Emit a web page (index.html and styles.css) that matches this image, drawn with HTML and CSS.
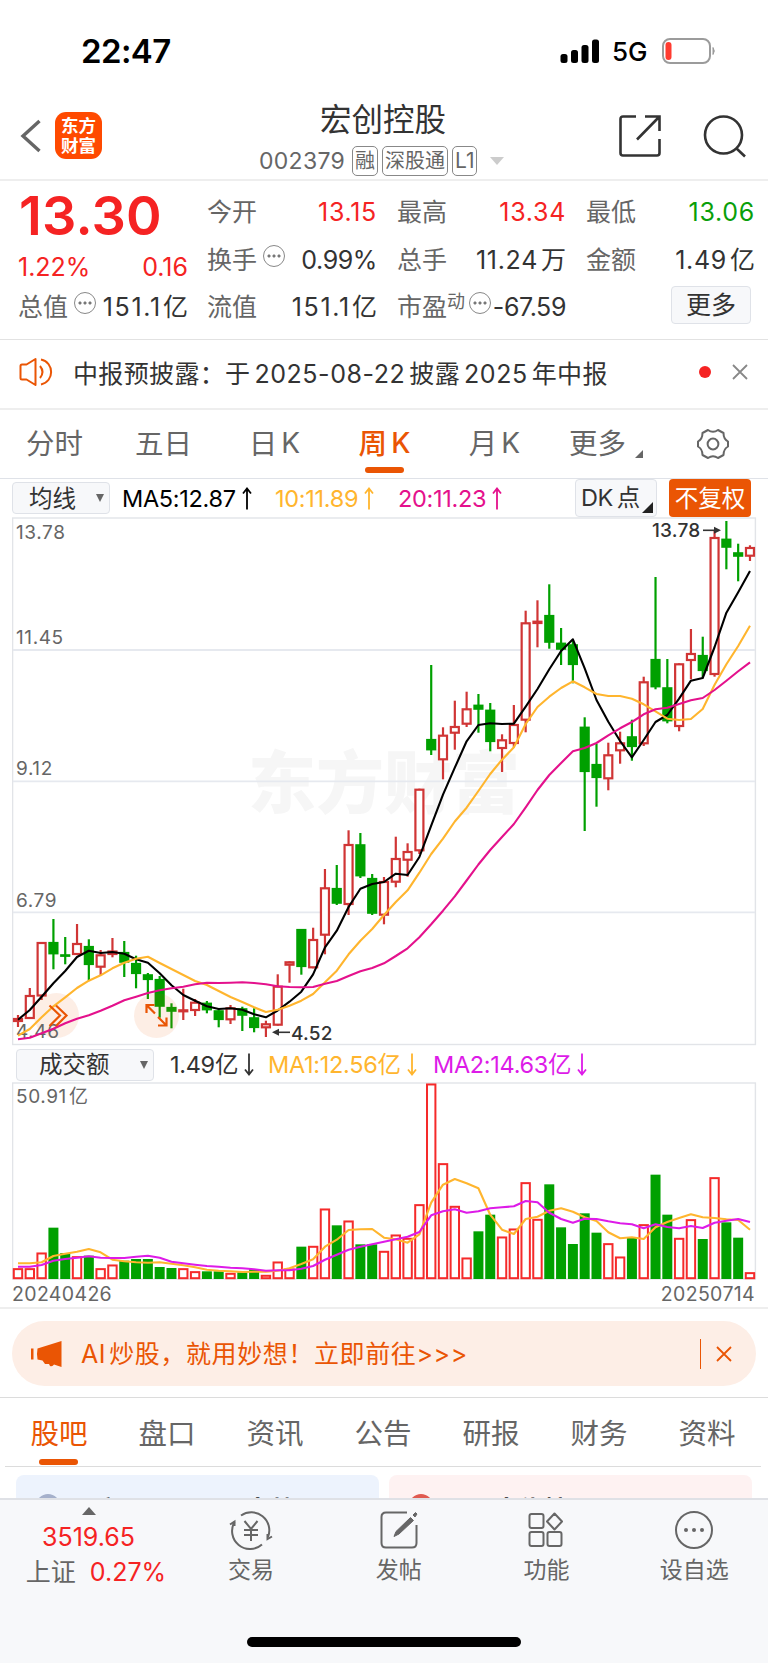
FILE: index.html
```
<!DOCTYPE html>
<html lang="zh-CN">

<head>
    <meta charset="UTF-8">
    <meta name="viewport" content="width=device-width, initial-scale=1.0">
    <title>宏创控股 002379</title>
    <link rel="stylesheet" href="styles.css">
</head>

<body>
    <div class="status-bar">
        <span class="clock">22:47</span>
        <svg class="signal" width="40" height="25" viewBox="0 0 40 25">
            <rect x="0.5" y="15" width="7" height="9" rx="2.5" />
            <rect x="11" y="11" width="7" height="13" rx="2.5" />
            <rect x="21.5" y="6" width="7" height="18" rx="2.5" />
            <rect x="32" y="0.5" width="7" height="23.5" rx="2.5" />
        </svg>
        <span class="network">5G</span>
        <svg class="battery" width="54" height="26" viewBox="0 0 54 26">
            <rect x="1" y="1" width="47" height="24" rx="7" fill="none" stroke="#9b9b9b" stroke-width="2" />
            <rect x="3.5" y="4" width="6" height="18" rx="3" fill="#ff3b30" />
            <path d="M51 9.5q2.5 3.5 0 7z" fill="#9b9b9b" stroke="#9b9b9b" />
        </svg>
    </div>

    <header class="header">
        <svg class="back" width="22" height="36" viewBox="0 0 22 36">
            <path d="M19.5 3L3 18l16.5 15" fill="none" stroke="#666" stroke-width="3.4" />
        </svg>
        <div class="logo"><span>东方</span><span>财富</span></div>
        <div class="stock">
            <h1>宏创控股</h1>
            <div class="code">
                <span class="code-number">002379</span>
                <span class="tag">融</span>
                <span class="tag">深股通</span>
                <span class="tag">L1</span>
                <svg class="caret" width="14" height="8" viewBox="0 0 14 8"><path d="M0 0h14l-7 8z" fill="#ccc" /></svg>
            </div>
        </div>
        <svg class="share" width="44" height="44" viewBox="0 0 44 44" fill="none" stroke="#333" stroke-width="2.6">
            <path d="M18 2.500H5Q2.500 2.500 2.500 5V39Q2.500 41.500 5 41.500H39Q41.500 41.500 41.500 39V25" />
            <path d="M27 2.500H41.500V17M41.500 2.500L19 25.500" />
        </svg>
        <svg class="search" width="44" height="44" viewBox="0 0 44 44" fill="none" stroke="#333" stroke-width="2.6">
            <circle cx="20.5" cy="21" r="18.500" />
            <path d="M33 34l9 8.500" />
        </svg>
    </header>

    <section class="quote">
        <div class="quote-main">
            <div class="price">13.30</div>
            <div class="change"><span>1.22%</span><span>0.16</span></div>
            <div class="stat"><label>总值</label><i class="more-dot"></i><b class="wide">151.1<em>亿</em></b></div>
        </div>
        <div class="quote-grid">
            <div class="stat"><label>今开</label><b class="up">13.15</b></div>
            <div class="stat"><label>最高</label><b class="up">13.34</b></div>
            <div class="stat"><label>最低</label><b class="down">13.06</b></div>
            <div class="stat"><label>换手</label><i class="more-dot"></i><b class="tight">0.99%</b></div>
            <div class="stat"><label>总手</label><b>11.24<em>万</em></b></div>
            <div class="stat"><label>金额</label><b>1.49<em>亿</em></b></div>
            <div class="stat"><label>流值</label><b class="wide">151.1<em>亿</em></b></div>
            <div class="stat"><label>市盈<sup>动</sup></label><i class="more-dot pe"></i><b class="tight">-67.59</b></div>
            <div class="stat"><button class="more-btn">更多</button></div>
        </div>
    </section>

    <section class="notice">
        <svg width="34" height="30" viewBox="0 0 34 30" fill="none" stroke="#ea5504" stroke-width="2" stroke-linejoin="round">
            <path d="M3 7.500Q1.500 7.500 1.500 9V21Q1.500 22.500 3 22.500H7.500L16.500 28V2L7.500 7.500Z" />
            <path d="M21 9q5 6 0 12M22 2.500c13.500 3 13.500 22 0 25" />
        </svg>
        <p>中报预披露：于<span>2025-08-22</span>披露<span>2025</span>年中报</p>
        <i class="dot"></i>
        <svg class="close" width="16" height="16" viewBox="0 0 16 16"><path d="M1 1l14 14M15 1L1 15" fill="none" stroke="#888" stroke-width="1.8" /></svg>
    </section>

    <nav class="periods">
        <a>分时</a>
        <a>五日</a>
        <a>日<span>K</span></a>
        <a class="active">周<span>K</span></a>
        <a>月<span>K</span></a>
        <a class="more">更多<svg class="corner" width="8" height="8" viewBox="0 0 8 8"><path d="M8 0v8H0z" fill="#666" /></svg></a>
        <a><svg class="gear" width="34" height="32" viewBox="0 0 34 32" fill="none" stroke="#666" stroke-width="2">
            <path d="M12 2Q17 5.500 22 2L27.500 5Q27.500 11 32 13.500V18.500Q27.500 21 27.500 27L22 30Q17 26.500 12 30L6.500 27Q6.500 21 2 18.500V13.500Q6.500 11 6.500 5Z" stroke-linejoin="round" />
            <circle cx="17" cy="16" r="5.400" />
        </svg></a>
    </nav>

    <div class="ma-row">
        <button class="select ma-select">均线<i></i></button>
        <span class="ma5">MA5:12.87<svg class="arrow" viewBox="0 0 10 22"><path d="M5 22V1M1 6l4-5 4 5" /></svg></span>
        <span class="ma10">10:11.89<svg class="arrow" viewBox="0 0 10 22"><path d="M5 22V1M1 6l4-5 4 5" /></svg></span>
        <span class="ma20">20:11.23<svg class="arrow" viewBox="0 0 10 22"><path d="M5 22V1M1 6l4-5 4 5" /></svg></span>
        <button class="dk">DK<em>点</em><svg width="11" height="11" viewBox="0 0 11 11"><path d="M11 0v11H0z" fill="#222" /></svg></button>
        <button class="adjust">不复权</button>
    </div>

    <svg id="price-chart" class="chart" width="745" height="529" viewBox="12 517 745 529"></svg>

    <div class="vol-row">
        <button class="select vol-select">成交额<i></i></button>
        <span class="vol-now">1.49亿<svg class="arrow" viewBox="0 0 10 22"><path d="M5 0v21M1 16l4 5 4-5" /></svg></span>
        <span class="vol-ma1">MA1:12.56亿<svg class="arrow" viewBox="0 0 10 22"><path d="M5 0v21M1 16l4 5 4-5" /></svg></span>
        <span class="vol-ma2">MA2:14.63亿<svg class="arrow" viewBox="0 0 10 22"><path d="M5 0v21M1 16l4 5 4-5" /></svg></span>
    </div>

    <svg id="volume-chart" class="chart" width="745" height="198" viewBox="12 1082 745 198"></svg>
    <div class="dates"><span>20240426</span><span>20250714</span></div>

    <div class="promo-wrap">
        <div class="promo">
            <svg width="32" height="28" viewBox="0 0 32 28" fill="#ea5504">
                <path d="M0 8.500h2.500v11H0zM6.500 8.500L30.500 1v26L23 24.500q-1.500 2.500-4 1.500l-1-2-4 0-2.500-3.500-5-1q-1-5.500 0-11z" />
            </svg>
            <span class="promo-text">AI<em>炒股，就用妙想！立即前往</em>&gt;&gt;&gt;</span>
            <i class="divider"></i>
            <svg width="16" height="16" viewBox="0 0 16 16"><path d="M1 1l14 14M15 1L1 15" fill="none" stroke="#ea5504" stroke-width="1.800" /></svg>
        </div>
    </div>

    <nav class="sections">
        <a class="active">股吧</a>
        <a>盘口</a>
        <a>资讯</a>
        <a>公告</a>
        <a>研报</a>
        <a>财务</a>
        <a>资料</a>
    </nav>

    <div class="cards">
        <div class="card blue"><i></i><span>国产DeepSeek大战</span></div>
        <div class="card pink"><i></i><span>股票大佬榜</span></div>
    </div>

    <footer class="toolbar">
        <div class="index">
            <svg width="14" height="8" viewBox="0 0 14 8"><path d="M7 0l7 8H0z" fill="#666" /></svg>
            <span class="index-value">3519.65</span>
            <span class="index-change"><em>上证</em>0.27%</span>
        </div>
        <a>
            <svg width="44" height="40" viewBox="0 0 44 40" fill="none" stroke="#666" stroke-width="2">
                <path d="M12 5.500A18 18 0 0 1 39 27M33 34.500A18 18 0 0 1 5.500 12" />
                <path d="M1 14.500l4.500-3V16M43 26.500l-4.500 2.500V24" />
                <path d="M15.500 11L22 19l6.500-8M22 19v12M15 20h14M15 25h14" />
            </svg>
            <span>交易</span>
        </a>
        <a>
            <svg width="44" height="40" viewBox="0 0 44 40" fill="none" stroke="#666" stroke-width="2">
                <path d="M30 2.500H9Q4.500 2.500 4.500 7V33Q4.500 37.500 9 37.500H35Q39.500 37.500 39.500 33V15" />
                <path d="M33.500 7.500l3 3L22 24l-5 2.500L19 21.500zM36 5l2.500-2.500 1.500 1.500-2 3z" fill="#666" stroke-width="1" />
            </svg>
            <span>发帖</span>
        </a>
        <a>
            <svg width="44" height="40" viewBox="0 0 44 40" fill="none" stroke="#666" stroke-width="2">
                <rect x="5.500" y="4" width="14" height="14" rx="2" />
                <path d="M30.500 3.500l7.500 8-7.500 8-7.500-8z" stroke-linejoin="round" />
                <rect x="5.500" y="22" width="14" height="14" rx="2" />
                <rect x="23.500" y="22" width="14" height="14" rx="2" />
            </svg>
            <span>功能</span>
        </a>
        <a>
            <svg width="44" height="40" viewBox="0 0 44 40" fill="none" stroke="#666" stroke-width="2">
                <circle cx="22" cy="20" r="18" />
                <g fill="#666" stroke="none">
                    <circle cx="14" cy="20" r="2" />
                    <circle cx="22" cy="20" r="2" />
                    <circle cx="30" cy="20" r="2" />
                </g>
            </svg>
            <span>设自选</span>
        </a>
        <i class="home"></i>
    </footer>

    <script src="chart.js"></script>
</body>

</html>
```
FILE: styles.css
```
* {
    box-sizing: border-box;
}

body {
    width: 768px;
    height: 1663px;
    margin: 0;
    overflow: hidden;
    background: #fff;
    color: #333;
    font-family: Inter, "Noto Sans CJK SC", sans-serif;
    font-size: 25px;
}

i,
em {
    font-style: normal;
}

svg {
    display: block;
    flex: none;
}

button {
    font: inherit;
    color: inherit;
    padding: 0;
    margin: 0;
}

/* status bar */
.status-bar {
    display: flex;
    align-items: center;
    height: 92px;
    padding: 10px 52px 0 81px;
    color: #000;
}

.clock {
    flex: 1;
    font-size: 33px;
    font-weight: 600;
    letter-spacing: -0.600px;
}

.network {
    width: 35px;
    margin: 1px 15px 0 12px;
    font-size: 26px;
    font-weight: 500;
}

/* header */
.header {
    display: flex;
    align-items: center;
    height: 89px;
    padding: 0 21px 0 20px;
    border-bottom: 2px solid #eee;
}

.back {
    margin: 0 13px 0 0;
}

.logo {
    display: flex;
    flex-direction: column;
    justify-content: center;
    width: 47px;
    height: 47px;
    border-radius: 11px;
    background: #ff4a00;
    color: #fff;
    font-size: 17.500px;
    font-weight: 700;
    line-height: 20px;
    text-align: center;
}

.stock {
    width: 260px;
    margin-left: 152px;
    padding-top: 5px;
}

h1 {
    margin: 0 0 0 66px;
    font-size: 31.500px;
    font-weight: 400;
    line-height: 40px;
}

.code {
    display: flex;
    align-items: center;
    height: 32px;
    margin-top: 5px;
    padding-left: 5px;
    color: #666;
}

.code-number {
    width: 93px;
    font-size: 23px;
    letter-spacing: 0.300px;
}

.tag {
    height: 30px;
    margin-right: 4px;
    padding: 0 2px;
    border: 1.500px solid #888;
    border-radius: 5px;
    font-size: 20px;
    line-height: 28px;
    white-space: nowrap;
}

.tag:nth-of-type(4) {
    font-size: 21px;
}

.caret {
    margin-left: 9px;
}

.share {
    margin-left: 104px;
}

.search {
    margin-left: auto;
}

/* quote */
.quote {
    display: flex;
    height: 159px;
    padding: 8px 13px 0 19px;
    border-bottom: 1px solid #e2e2e2;
}

.quote-main {
    width: 169px;
    margin-right: 19px;
}

.price {
    height: 55px;
    color: #f52323;
    font-size: 54px;
    font-weight: 600;
    line-height: 53px;
    letter-spacing: 0.200px;
}

.change {
    display: flex;
    justify-content: space-between;
    height: 40px;
    margin-left: -1px;
    color: #f52323;
    line-height: 46px;
    letter-spacing: 0;
}

.quote-grid {
    flex: 1;
    display: grid;
    grid-template-columns: 170px 169px 169px;
    grid-auto-rows: 47.500px;
    column-gap: 20px;
}

.stat {
    display: flex;
    height: 47.500px;
    line-height: 47px;
    white-space: nowrap;
}

.quote-main .stat {
    margin-left: -1px;
}

.stat label {
    color: #666;
}

.stat b {
    margin-left: auto;
    font-weight: 400;
    letter-spacing: 0.700px;
}

.stat .wide {
    letter-spacing: 1.700px;
}

.stat .tight {
    letter-spacing: -0.400px;
}

.stat .up {
    color: #f52323;
}

.stat .down {
    color: #0a9f0a;
}

.stat b em {
    margin-left: 3px;
    letter-spacing: 0;
}

.stat .wide em {
    margin-left: 1px;
}

.stat sup {
    font-size: 18px;
    line-height: 0;
    vertical-align: 8px;
}

.more-dot {
    width: 22px;
    height: 22px;
    margin: 8px 0 0 6px;
    border: 1.500px solid #888;
    border-radius: 50%;
    background:
        radial-gradient(circle at 5px 10px, #777 1.300px, transparent 1.800px),
        radial-gradient(circle at 10px 10px, #777 1.300px, transparent 1.800px),
        radial-gradient(circle at 15px 10px, #777 1.300px, transparent 1.800px);
}

.more-dot.pe {
    margin-left: 4px;
}

.more-btn {
    width: 80px;
    height: 38px;
    margin: 2px 4px 0 auto;
    border: 1.500px solid #dfe2e8;
    border-radius: 4px;
    background: #f7f8fa;
    line-height: 35px;
}

/* notice */
.notice {
    display: flex;
    align-items: center;
    height: 70px;
    padding: 0 20px 4px 19px;
    border-bottom: 2px solid #eee;
}

.notice p {
    flex: 1;
    margin: 0 0 0 20px;
    letter-spacing: 0.350px;
    white-space: nowrap;
}

.notice p span {
    margin: 0 4px;
    letter-spacing: 0.550px;
}

.dot {
    width: 12px;
    height: 12px;
    margin-right: 21px;
    border-radius: 50%;
    background: #f52323;
}

/* period tabs */
.periods {
    display: grid;
    grid-template-columns: 109px 109px 113px 107px 113px 115px 102px;
    height: 69px;
    border-bottom: 1.500px solid #dfe2e8;
    color: #666;
    font-size: 28.500px;
}

.periods a {
    display: flex;
    justify-content: center;
    line-height: 67px;
}

.periods a span {
    margin-left: 4px;
    font-size: 28px;
}

.active {
    position: relative;
    color: #ea5504;
}

.active::after {
    content: "";
    position: absolute;
    left: 50%;
    bottom: 5px;
    width: 39px;
    height: 6px;
    margin-left: -20px;
    border-radius: 3px;
    background: #ea5504;
}

.periods .active {
    font-weight: 500;
}

.periods .more {
    padding-right: 5px;
}

.corner {
    margin: 40px 0 0 9px;
}

.gear {
    margin: 18px 0 0 -9px;
}

/* chart legends */
.ma-row,
.vol-row {
    position: relative;
    display: flex;
    align-items: center;
    padding-left: 12px;
    font-size: 23.500px;
    line-height: 32px;
    white-space: nowrap;
}

.ma-row {
    height: 38px;
}

.vol-row {
    height: 36px;
    padding: 1px 0 0 16px;
}

.ma-row > span,
.vol-row > span {
    display: flex;
    align-items: center;
    letter-spacing: -0.300px;
}

.ma-row > span {
    padding-top: 1px;
}

.arrow {
    width: 10px;
    height: 23px;
    margin-left: 6px;
    fill: none;
    stroke: currentColor;
    stroke-width: 1.800;
}

.select {
    display: flex;
    align-items: center;
    justify-content: space-between;
    height: 32px;
    border: 1.500px solid #dfe2e8;
    border-radius: 4px;
    background: #f7f8fa;
    line-height: 29px;
}

.select i {
    border: 4.500px solid transparent;
    border-top: 8px solid #666;
    border-bottom: 0;
}

.ma-select {
    width: 98px;
    padding: 0 5px 0 16px;
}

.vol-select {
    width: 138px;
    padding: 0 5px 0 22px;
}

.ma5 {
    width: 153px;
    margin-left: 12px;
    color: #000;
}

.ma10 {
    width: 123px;
    color: #ffb52e;
}

.ma20 {
    width: 177px;
    color: #e4118c;
}

.dk {
    display: flex;
    align-items: center;
    width: 82px;
    height: 38px;
    padding-left: 5px;
    border: 1.500px solid #dfe2e8;
    border-radius: 4px;
    background: #f7f8fa;
    letter-spacing: -0.500px;
}

.dk em {
    margin: 0 2px 0 4px;
}

.dk svg {
    margin-top: 18px;
}

.adjust {
    width: 82px;
    height: 38px;
    margin-left: 12px;
    border: 0;
    border-radius: 4px;
    background: #ea5504;
    color: #fff;
    line-height: 37px;
}

.vol-now {
    width: 98px;
    margin-left: 16px;
}

.vol-ma1 {
    width: 165px;
    color: #ffb52e;
}

.vol-ma2 {
    color: #dd1be8;
}

/* charts */
.chart {
    margin-left: 12px;
}

.frame {
    fill: none;
    stroke: #e2e4e8;
    stroke-width: 1.400;
}

.grid {
    stroke: #e6e9ef;
    stroke-width: 1.800;
}

.axis {
    fill: #666;
    font-size: 19px;
    letter-spacing: 0.600px;
}

.mark {
    fill: #333;
    font-size: 19px;
    font-weight: 500;
    letter-spacing: 0.200px;
}

.watermark {
    fill: #f6f6f6;
    font-size: 68px;
    font-weight: 900;
}

.candle-up {
    fill: #fff;
    stroke: #d03535;
    stroke-width: 2.200;
}

.candle-down {
    fill: #00a000;
    stroke: #00a000;
    stroke-width: 2.200;
}

.bar-up {
    fill: #fff;
    stroke: #f52a2a;
    stroke-width: 2;
}

.bar-down {
    fill: #00a000;
    stroke: #00a000;
    stroke-width: 1.600;
}

.line {
    fill: none;
    stroke-width: 2.100;
    stroke-linejoin: round;
}

.dates {
    display: flex;
    justify-content: space-between;
    height: 29px;
    padding: 0 13px 0 12px;
    border-bottom: 2px solid #eee;
    color: #666;
    font-size: 19.500px;
    line-height: 28px;
    letter-spacing: 0.350px;
}

/* promo */
.promo-wrap {
    height: 89px;
    padding: 12px 12px 0;
    border-bottom: 1px solid #dcdcdc;
}

.promo {
    display: flex;
    align-items: center;
    height: 65px;
    padding: 0 24px 0 19px;
    border-radius: 33px;
    background: #fdeee6;
    color: #ea5504;
}

.promo-text {
    flex: 1;
    margin-left: 18px;
    line-height: 36px;
    letter-spacing: 0.600px;
}

.promo-text em {
    margin-left: 3px;
}

.divider {
    width: 1.500px;
    height: 30px;
    margin-right: 15px;
    background: #ea5504;
}

/* section tabs */
.sections {
    display: grid;
    grid-template-columns: repeat(7, 108px);
    height: 69px;
    margin: 0 7px 0 5px;
    border-bottom: 1px solid #dcdcdc;
    color: #666;
    font-size: 28.500px;
    line-height: 71px;
    text-align: center;
}

.sections .active::after {
    bottom: 4px;
}

.cards {
    display: flex;
    gap: 10px;
    height: 31px;
    padding: 8px 16px 0;
    overflow: hidden;
}

.card {
    flex: 1;
    display: flex;
    height: 90px;
    padding: 19px 20px;
    border-radius: 8px;
    font-weight: 700;
    color: #222;
    line-height: 33px;
}

.card i {
    width: 24px;
    height: 24px;
    margin-right: 11px;
    border-radius: 50%;
}

.blue {
    background: #edf3fd;
}

.blue i {
    background: #a5b0cb;
}

.pink {
    background: #fef2f2;
}

.pink i {
    background: #e05a50;
}

/* toolbar */
.toolbar {
    position: relative;
    display: grid;
    grid-template-columns: 177px repeat(4, 147.800px);
    height: 166px;
    border-top: 2px solid #dfe1e6;
    background: #f7f8fa;
    color: #666;
}

.toolbar a {
    display: flex;
    flex-direction: column;
    align-items: center;
    padding-top: 10px;
    font-size: 23px;
    line-height: 40px;
}

.index {
    display: flex;
    flex-direction: column;
    align-items: center;
    padding-top: 7px;
}

.index-value,
.index-change {
    color: #f52323;
    line-height: 35px;
}

.index-value {
    margin-top: 5px;
}

.index-change {
    margin-left: 15px;
}

.index-change em {
    margin-right: 14px;
    color: #666;
}

.home {
    position: absolute;
    left: 247px;
    bottom: 17px;
    width: 274px;
    height: 10px;
    border-radius: 5px;
    background: #000;
}
```
FILE: chart.js
```
const FIRST_X = 18;
const STEP = 11.806;
const x = i => FIRST_X + i * STEP;

// [rising, high, body top, body bottom, low]
const candles = [
    [1, 1015, 1018, 1022, 1027], [1, 988, 995, 1019, 1019], [1, 942, 942, 996.5, 1000], [0, 919, 942, 954.3, 969.3],
    [0, 937, 954.3, 955.7, 964.3], [1, 924, 943, 955, 955], [0, 939.3, 946, 965, 980.7], [1, 950, 954.3, 967.7, 975],
    [1, 938, 950.5, 955, 957.3], [0, 941, 952, 962.7, 977], [0, 955.7, 963, 974, 988.3], [0, 973, 974.3, 980, 999],
    [0, 976, 979, 1006.7, 1017.7], [0, 1003.3, 1007, 1011.7, 1028.3], [1, 988.7, 1009.3, 1012.3, 1020], [1, 999, 1001.7, 1011, 1016],
    [0, 1001, 1002.7, 1010.3, 1013.3], [0, 1008, 1010.3, 1020, 1027.3], [1, 1005, 1007.3, 1020.3, 1024], [0, 1006.7, 1008.3, 1015.7, 1031],
    [0, 1008.3, 1017.3, 1028, 1032.3], [1, 1020.7, 1023.3, 1028.3, 1037], [1, 974.3, 985.7, 1025.7, 1025.7], [1, 961.3, 961.3, 965.7, 982.7],
    [0, 929, 929, 967, 974.7], [1, 927.7, 939, 968.3, 968.3], [1, 869, 887.3, 935.7, 954.3], [0, 865, 888, 903.7, 905],
    [1, 830.3, 844, 905, 915], [0, 833, 844.3, 876.3, 878], [0, 874, 878, 913.7, 915], [1, 877, 881, 915.7, 924.3],
    [1, 836.7, 858, 882.7, 887.3], [1, 843.3, 851, 860.7, 876.7], [1, 788.7, 788.7, 851.3, 854], [0, 665, 739, 750.3, 755],
    [1, 727.3, 734.7, 760.3, 779.3], [1, 700.7, 726, 733.7, 749.7], [1, 691.7, 708.3, 724.7, 727], [0, 694, 704.7, 709.7, 732.7],
    [0, 703, 709.7, 742, 751.3], [1, 734.3, 739.3, 749, 772], [1, 705, 724, 744, 747.3], [1, 610.7, 622.3, 720.7, 732.3],
    [1, 600.3, 620.7, 624, 647.3], [0, 584.3, 615, 642.7, 648.7], [0, 628, 642.7, 649.7, 665], [0, 640, 644.3, 665, 683.3],
    [0, 717.3, 726.7, 772, 831], [0, 744, 764, 778, 806.7], [1, 742.7, 754.3, 779.3, 790.3], [1, 731.7, 742.3, 751.3, 763.7],
    [0, 719.7, 736.3, 747, 760.7], [1, 676.7, 681.3, 744.3, 746], [0, 577, 659, 687.3, 689.3], [0, 659, 687.3, 721.3, 723.3],
    [1, 663.3, 663.3, 727, 731.3], [1, 629, 653, 661, 679.3], [0, 636.7, 655, 671, 677.7], [1, 530.7, 537, 675, 676.7],
    [0, 521, 538.7, 547.7, 569.3], [0, 543.7, 552.3, 556.7, 581.3], [1, 545.3, 547, 556.7, 561]
];

const ma5 = [
    1019.7, 1010, 996.7, 983.3, 971, 957, 950.7, 953, 952, 953.7, 959.3, 962.7, 973.3, 985.3, 995, 1000.7, 1006.3, 1009, 1008.3, 1009.7,
    1014.3, 1017.3, 1010.5, 1001.7, 991.7, 974.3, 947.3, 930.7, 907, 888.7, 884, 882, 873.7, 875, 857, 825.7, 794.7, 767.7, 741.3, 725,
    723.3, 724, 723.7, 706.7, 689, 669.3, 651, 639.3, 668.3, 700, 721.7, 741, 757.3, 740, 722, 715, 698.7, 680.7, 678, 647, 612.7, 592.3, 571
];

const ma10 = [
    1035.7, 1029, 1017.3, 1006.3, 997.3, 988, 980.7, 975.3, 968.3, 962.7, 958.7, 956.7, 963, 969, 975, 981, 985, 991, 997, 1002,
    1007.3, 1012, 1009.7, 1005.7, 1000.7, 994, 982.3, 970.7, 954.3, 940.7, 929, 915, 902, 890.3, 872.7, 854, 838.7, 821.5, 807.7, 791,
    774, 759.7, 747.3, 724, 707, 696.7, 688, 681.3, 687.3, 694, 696, 696, 698.7, 704.3, 711.3, 718.7, 720, 719, 709, 684.7, 664.3, 646, 625.7
];

const ma20 = [
    1039.3, 1037.7, 1033.3, 1028.7, 1023.3, 1018.7, 1015.3, 1010.7, 1005.7, 1000.3, 996.7, 993, 990.3, 988.3, 986.7, 984.3, 982.7, 983, 982.7, 982.3,
    983, 984.3, 986.3, 987, 987.3, 987, 983.7, 981, 976, 971.3, 968, 963.3, 956, 948.3, 937.3, 924.3, 910.7, 896.3, 880.5, 864.5,
    850, 837, 824, 807.3, 790, 775, 763, 751.3, 748, 743, 735.3, 728.3, 722, 714.3, 709.3, 707.7, 704, 700.3, 698, 690, 680.7, 671.3, 662.3
];

// turnover, in thirds of a pixel counted down from y = 1040, the floor is 717
const VOL_FLOOR = 717;
const volY = v => 1040 + v / 3;

// [rising, top]
const volumes = [
    [1, 685], [1, 685], [1, 638], [0, 563], [0, 639], [1, 649], [0, 647], [1, 685], [1, 674], [0, 662],
    [0, 657], [0, 657], [0, 681], [0, 684], [1, 685], [1, 694], [0, 694], [0, 694], [1, 699], [0, 697],
    [0, 687], [1, 705], [1, 665], [1, 686], [0, 620], [1, 618], [1, 506], [0, 556], [1, 542], [0, 613],
    [0, 613], [1, 633], [1, 584], [1, 594], [1, 493], [1, 131], [1, 370], [1, 498], [1, 653], [0, 574],
    [0, 524], [1, 590], [1, 566], [1, 427], [1, 537], [0, 433], [0, 562], [0, 612], [0, 520], [0, 578],
    [1, 610], [1, 650], [0, 593], [1, 553], [0, 404], [0, 524], [1, 594], [1, 538], [0, 597], [1, 412],
    [0, 547], [0, 593], [1, 697]
];

const volMa1 = [
    670, 670, 667, 648, 641, 635, 627, 637, 659, 664, 667, 668, 667, 671, 676, 682, 689, 692, 694, 696, 695,
    695, 692, 685, 672, 658, 620, 599, 570, 568, 567, 593, 598, 608, 583, 488, 434, 417, 430, 445, 524, 569,
    582, 537, 530, 512, 505, 515, 532, 543, 577, 595, 592, 597, 562, 546, 534, 523, 532, 534, 538, 540, 569
];

const volMa2 = [
    680, 680, 675, 662, 657, 653, 649, 653, 654, 654, 650, 647, 653, 665, 670, 674, 678, 680, 683, 685, 688,
    692, 691, 691, 686, 678, 659, 644, 629, 620, 613, 605, 598, 590, 576, 526, 514, 508, 518, 514, 505, 502,
    499, 483, 487, 518, 537, 548, 536, 537, 544, 550, 553, 565, 553, 561, 565, 558, 564, 548, 542, 537, 546
];

function line(values, color) {
    const points = values.map((v, i) => x(i).toFixed(1) + ',' + v.toFixed(1)).join(' ');
    return `<polyline class="line" stroke="${color}" points="${points}"/>`;
}

function candle([up, high, top, bottom, low], i) {
    const cx = x(i);
    const height = Math.max(bottom - top - 2, 0.5);
    return `<g class="${up ? 'candle-up' : 'candle-down'}">
        <path d="M${cx} ${high}V${low}"/>
        <rect x="${cx - 4}" y="${top + 1}" width="8" height="${height}"/>
    </g>`;
}

function bar([up, top], i) {
    const y = volY(top);
    return `<rect class="${up ? 'bar-up' : 'bar-down'}" x="${x(i) - 4.2}" y="${y + 0.8}" width="8.4" height="${volY(VOL_FLOOR) - y - 1.6}"/>`;
}

function drawPrice() {
    let svg = '<text class="watermark" x="248" y="808">东方财富</text>';
    svg += '<rect class="frame" x="12.6" y="518" width="742.8" height="526.500"/>';
    [650, 781.3, 912.3].forEach(y => {
        svg += `<path class="grid" d="M13 ${y}H755"/>`;
    });
    svg += candles.map(candle).join('');
    svg += '<g fill="#ea5504" fill-opacity="0.1"><circle cx="56.500" cy="1015.500" r="22.500"/><circle cx="156.500" cy="1015.500" r="22.500"/></g>';
    svg += '<text class="axis" x="16" y="539">13.78</text><text class="axis" x="16" y="644">11.45</text>';
    svg += '<text class="axis" x="16" y="775">9.12</text><text class="axis" x="16" y="906.500">6.79</text><text class="axis" x="16" y="1037.500">4.46</text>';
    svg += line(ma5, '#000') + line(ma10, '#ffb52e') + line(ma20, '#e4118c');
    // expand and fullscreen handles
    svg += '<g fill="none" stroke="#ea5504" stroke-width="2.200"><path d="M49.500 1005.500l10.500 10-10.500 10.500M56 1005.500l10.500 10-10.500 10.500"/>';
    svg += '<path d="M146.500 1013v-8h8M146.500 1005l8.500 8.500M158 1017l8.500 8.500M158 1025.500h8.500v-8"/></g>';
    svg += '<path d="M290 1032.300H276" stroke="#333" stroke-width="1.600"/><path d="M272 1032.300l7-3.500v7z" fill="#333"/>';
    svg += '<text class="mark" x="291" y="1039.500">4.52</text>';
    svg += '<text class="mark" x="652" y="537">13.78</text>';
    svg += '<path d="M703 530.300H717" stroke="#333" stroke-width="1.600"/><path d="M721 530.300l-7-3.500v7z" fill="#333"/>';
    document.getElementById('price-chart').innerHTML = svg;
}

function drawVolume() {
    let svg = '<rect class="frame" x="12.6" y="1083" width="742.8" height="196"/>';
    svg += '<text class="axis" x="16" y="1102.500">50.91<tspan dx="2">亿</tspan></text>';
    svg += volumes.map(bar).join('');
    svg += line(volMa1.map(volY), '#ffb52e') + line(volMa2.map(volY), '#dd1be8');
    document.getElementById('volume-chart').innerHTML = svg;
}

drawPrice();
drawVolume();
```
